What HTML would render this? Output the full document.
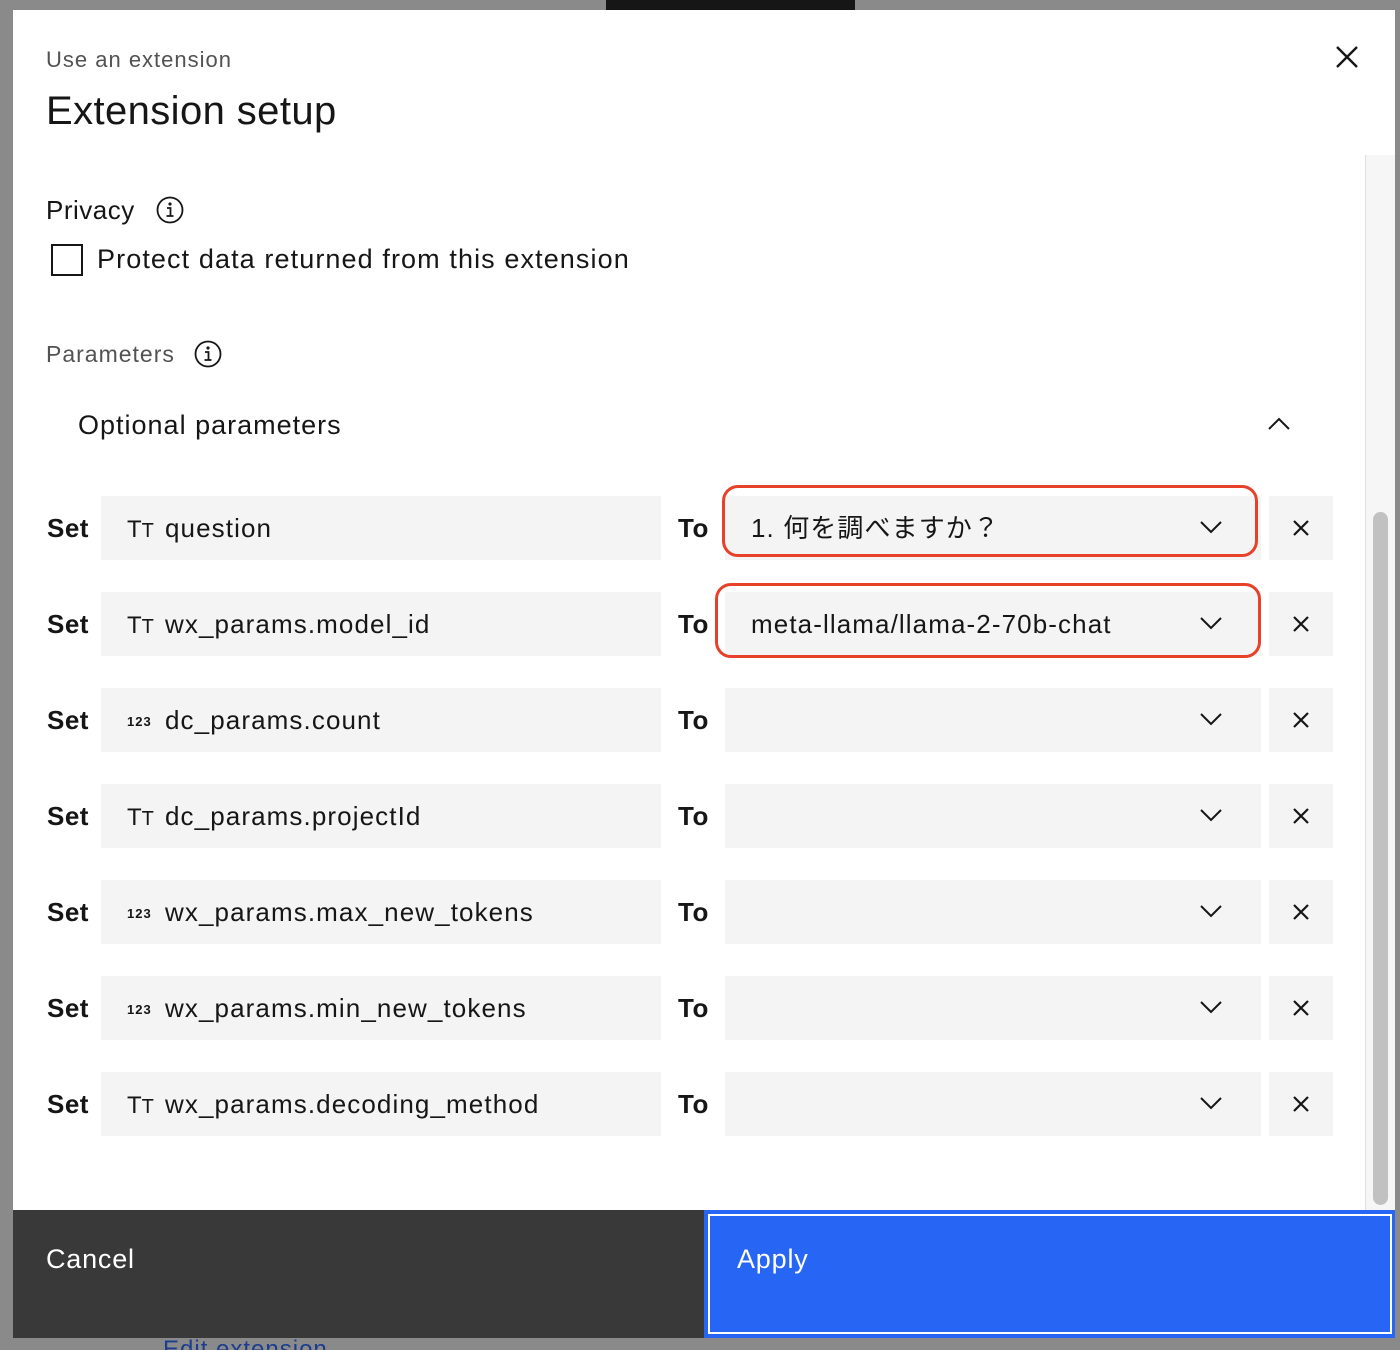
<!DOCTYPE html>
<html><head><meta charset="utf-8"><style>
*{margin:0;padding:0;box-sizing:border-box}
html,body{width:1400px;height:1350px;overflow:hidden}
body{background:#8a8a8a;position:relative;font-family:"Liberation Sans","Noto Sans CJK JP",sans-serif;color:#161616}
.a{position:absolute}
.modal{left:13px;top:10px;width:1382px;height:1328px;background:#fff}
.lbl{font-size:26px;font-weight:bold;line-height:64px;letter-spacing:.5px}
.fld{background:#f4f4f4;height:64px;font-size:26px;line-height:64px;letter-spacing:1.1px}
.ico{display:inline-block;width:38px;font-size:24px;letter-spacing:0}
.ico2{display:inline-block;width:38px;font-size:13px;font-weight:bold;letter-spacing:1px;vertical-align:3px}
.red{border:3px solid #e8412a;border-radius:16px}
</style></head><body>
<div class="a" style="left:606px;top:0;width:249px;height:10px;background:#161616"></div>
<div class="a modal"></div>
<div class="a" style="left:46px;top:47px;font-size:22px;color:#525252;letter-spacing:1px">Use an extension</div>
<div class="a" style="left:46px;top:89px;font-size:40px;letter-spacing:.4px">Extension setup</div>
<svg class="a" style="left:1334px;top:44px" width="26" height="26" viewBox="0 0 26 26"><path d="M3 3L23 23M23 3L3 23" stroke="#161616" stroke-width="2.4"/></svg>
<div class="a" style="left:1365px;top:155px;width:30px;height:1055px;background:#f6f6f6;border-left:1px solid #e0e0e0"></div>
<div class="a" style="left:1373px;top:512px;width:15px;height:693px;background:#c1c1c1;border-radius:8px"></div>
<div class="a" style="left:46px;top:195px;font-size:26px;letter-spacing:.5px">Privacy</div>
<svg class="a" style="left:155px;top:195px" width="30" height="30" viewBox="0 0 30 30"><circle cx="15" cy="15" r="12.5" fill="none" stroke="#161616" stroke-width="1.8"/><circle cx="15" cy="9" r="1.6" fill="#161616"/><path d="M12 13h3.5v8M11.5 21h7" stroke="#161616" stroke-width="1.8" fill="none"/></svg>
<div class="a" style="left:51px;top:244px;width:32px;height:32px;border:2px solid #161616"></div>
<div class="a" style="left:97px;top:244px;font-size:27px;letter-spacing:1.1px">Protect data returned from this extension</div>
<div class="a" style="left:46px;top:341px;font-size:23px;color:#525252;letter-spacing:1px">Parameters</div>
<svg class="a" style="left:193px;top:339px" width="30" height="30" viewBox="0 0 30 30"><circle cx="15" cy="15" r="12.5" fill="none" stroke="#161616" stroke-width="1.8"/><circle cx="15" cy="9" r="1.6" fill="#161616"/><path d="M12 13h3.5v8M11.5 21h7" stroke="#161616" stroke-width="1.8" fill="none"/></svg>
<div class="a" style="left:78px;top:410px;font-size:27px;letter-spacing:1px">Optional parameters</div>
<svg class="a" style="left:1267px;top:414px" width="24" height="20" viewBox="0 0 24 20"><path d="M2 15L12 5L22 15" stroke="#161616" stroke-width="2" fill="none"/></svg>

<div class="a" style="left:0;top:496px;width:1400px">
 <div class="a lbl" style="left:47px">Set</div><div class="a fld" style="left:101px;width:560px;padding-left:26px"><span class="ico">T<small>T</small></span>question</div>
 <div class="a lbl" style="left:678px">To</div><div class="a fld" style="left:725px;width:536px;padding-left:26px">1. 何を調べますか？</div>
</div>
<div class="a" style="left:0;top:592px;width:1400px">
 <div class="a lbl" style="left:47px">Set</div><div class="a fld" style="left:101px;width:560px;padding-left:26px"><span class="ico">T<small>T</small></span>wx_params.model_id</div>
 <div class="a lbl" style="left:678px">To</div><div class="a fld" style="left:725px;width:536px;padding-left:26px">meta-llama/llama-2-70b-chat</div>
</div>
<div class="a" style="left:0;top:688px;width:1400px">
 <div class="a lbl" style="left:47px">Set</div><div class="a fld" style="left:101px;width:560px;padding-left:26px"><span class="ico2">123</span>dc_params.count</div>
 <div class="a lbl" style="left:678px">To</div><div class="a fld" style="left:725px;width:536px"></div>
</div>
<div class="a" style="left:0;top:784px;width:1400px">
 <div class="a lbl" style="left:47px">Set</div><div class="a fld" style="left:101px;width:560px;padding-left:26px"><span class="ico">T<small>T</small></span>dc_params.projectId</div>
 <div class="a lbl" style="left:678px">To</div><div class="a fld" style="left:725px;width:536px"></div>
</div>
<div class="a" style="left:0;top:880px;width:1400px">
 <div class="a lbl" style="left:47px">Set</div><div class="a fld" style="left:101px;width:560px;padding-left:26px"><span class="ico2">123</span>wx_params.max_new_tokens</div>
 <div class="a lbl" style="left:678px">To</div><div class="a fld" style="left:725px;width:536px"></div>
</div>
<div class="a" style="left:0;top:976px;width:1400px">
 <div class="a lbl" style="left:47px">Set</div><div class="a fld" style="left:101px;width:560px;padding-left:26px"><span class="ico2">123</span>wx_params.min_new_tokens</div>
 <div class="a lbl" style="left:678px">To</div><div class="a fld" style="left:725px;width:536px"></div>
</div>
<div class="a" style="left:0;top:1072px;width:1400px">
 <div class="a lbl" style="left:47px">Set</div><div class="a fld" style="left:101px;width:560px;padding-left:26px"><span class="ico">T<small>T</small></span>wx_params.decoding_method</div>
 <div class="a lbl" style="left:678px">To</div><div class="a fld" style="left:725px;width:536px"></div>
</div>

<svg class="a" style="left:0;top:0" width="1400" height="1350">
 <g fill="none" stroke="#161616" stroke-width="2">
  <path d="M1201 522l10 10l10-10M1201 618l10 10l10-10M1201 714l10 10l10-10M1201 810l10 10l10-10M1201 906l10 10l10-10M1201 1002l10 10l10-10M1201 1098l10 10l10-10"/>
 </g>
 <g fill="#f4f4f4"><rect x="1269" y="496" width="64" height="64"/><rect x="1269" y="592" width="64" height="64"/><rect x="1269" y="688" width="64" height="64"/><rect x="1269" y="784" width="64" height="64"/><rect x="1269" y="880" width="64" height="64"/><rect x="1269" y="976" width="64" height="64"/><rect x="1269" y="1072" width="64" height="64"/></g>
 <g stroke="#161616" stroke-width="2.2">
  <path d="M1294 521l14 14M1308 521l-14 14M1294 617l14 14M1308 617l-14 14M1294 713l14 14M1308 713l-14 14M1294 809l14 14M1308 809l-14 14M1294 905l14 14M1308 905l-14 14M1294 1001l14 14M1308 1001l-14 14M1294 1097l14 14M1308 1097l-14 14"/>
 </g>
</svg>
<div class="a red" style="left:722px;top:485px;width:536px;height:72px"></div>
<div class="a red" style="left:715px;top:583px;width:546px;height:75px"></div>

<div class="a" style="left:13px;top:1210px;width:691px;height:128px;background:#393939"></div>
<div class="a" style="left:46px;top:1244px;font-size:27px;color:#fff;letter-spacing:.8px">Cancel</div>
<div class="a" style="left:704px;top:1210px;width:691px;height:128px;background:#2766f4"></div>
<div class="a" style="left:708px;top:1214px;width:684px;height:120px;border:2px solid #fff"></div>
<div class="a" style="left:737px;top:1244px;font-size:27px;color:#fff;letter-spacing:.8px">Apply</div>
<div class="a" style="left:163px;top:1336px;font-size:24px;color:#1b3d8f;letter-spacing:1px">Edit extension</div>
</body></html>
